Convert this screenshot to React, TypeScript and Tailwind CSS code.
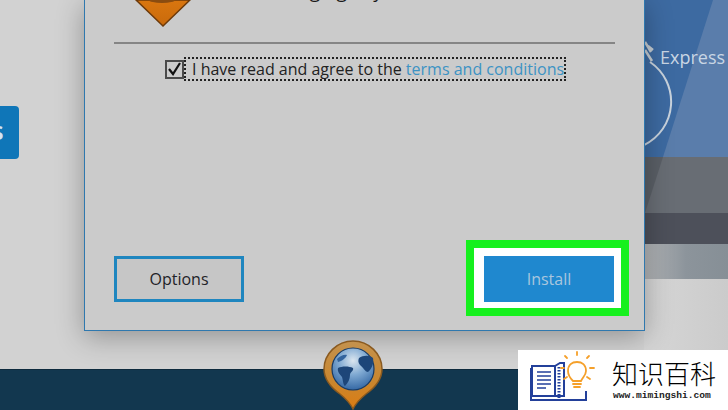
const sans = "font-['Open_Sans','Noto_Sans',sans-serif]";

function TopPin() {
  return (
    <svg className="absolute left-[50px] top-0" width="56" height="28" viewBox="0 0 56 28">
      <defs>
        <linearGradient id="pinFill" x1="0" y1="0" x2="0" y2="1">
          <stop offset="0" stopColor="#d9760f" />
          <stop offset="1" stopColor="#c96a0c" />
        </linearGradient>
      </defs>
      <path d="M1 0 L28 26 L55 0 Z" fill="url(#pinFill)" stroke="#6d3a0a" strokeWidth="1.5" />
      <ellipse cx="27" cy="0" rx="13" ry="3" fill="#8a4c10" />
    </svg>
  );
}

function GlobePin() {
  return (
    <svg className="absolute left-[322px] top-[339px]" width="62" height="71" viewBox="0 0 62 71">
      <defs>
        <radialGradient id="globe" cx="0.5" cy="0.3" r="0.75">
          <stop offset="0" stopColor="#dbe6ef" />
          <stop offset="0.45" stopColor="#7fa9d2" />
          <stop offset="1" stopColor="#2a5f9e" />
        </radialGradient>
        <linearGradient id="rim" x1="0" y1="0" x2="0" y2="1">
          <stop offset="0" stopColor="#c4924e" />
          <stop offset="0.6" stopColor="#c9862e" />
          <stop offset="1" stopColor="#dc7c12" />
        </linearGradient>
      </defs>
      <path
        d="M31 2 C15 2 2 15 2 30 C2 42 11 50 18 55 C23 59 28 64 31 70 C34 64 39 59 44 55 C51 50 60 42 60 30 C60 15 47 2 31 2 Z"
        fill="url(#rim)"
        stroke="#8a5a20"
        strokeWidth="1.5"
      />
      <circle cx="31" cy="30" r="21" fill="url(#globe)" stroke="#163a66" strokeWidth="1.2" />
      <path d="M16 29 C20 27 27 27 31 29 C32 32 28 33 28 36 C28 40 26 44 23 47 C21 46 21 41 20 38 C18 35 15 33 16 29 Z" fill="#1d4679" />
      <path d="M37 19 C41 16 48 16 51 19 C52 24 50 30 46 33 C43 33 41 28 38 26 C36 24 36 21 37 19 Z" fill="#1d4679" />
      <path d="M15 20 C18 17 22 15 25 16 C24 19 20 22 16 23 Z" fill="#33649e" />
    </svg>
  );
}

function Watermark() {
  return (
    <div className="absolute left-[518px] top-[350px] flex h-[60px] w-[210px] items-center bg-white">
      <svg width="86" height="60" viewBox="0 0 86 60" fill="none" className="shrink-0">
        <g stroke="#23409a" strokeWidth="2">
          <path d="M14 16 L37 16 L37 46 L14 46 Z" />
          <path d="M13 18 L13 50 L68 50 L68 41" />
          <path d="M37 16 L42 13 L46 13 L46 46 L37 46" />
        </g>
        <g stroke="#23409a" strokeWidth="1.6">
          <path d="M19 22 L33 22 M19 26 L33 26 M19 30 L33 30 M19 34 L33 34 M19 38 L28 38" />
          <path d="M41 17 L41 48" strokeDasharray="1.5 1.5" strokeWidth="3" />
        </g>
        <g stroke="#f5a02a" strokeWidth="1.8" strokeLinecap="round">
          <path d="M55 31 C51 27 50 24 50 21 C50 15 54 12 59 12 C64 12 68 15 68 21 C68 25 65 27 63 31 Z" />
          <path d="M55 34 L63 34 M56 37 L62 37" />
          <path d="M59 2 L59 5 M47 6 L49 8 M71 6 L69 8 M43 18 L46 18 M72 18 L76 18 M46 29 L49 27 M72 29 L69 27" />
        </g>
      </svg>
      <div className="ml-[8px] flex flex-col items-start">
        <span className="h-[30px] text-[26px] leading-[30px] text-black font-['Noto_Sans_CJK_SC',sans-serif] font-light">知识百科</span>
        <span className="mt-[2px] ml-px text-[9.6px] font-bold leading-[12px] text-[#222] font-['Liberation_Mono',monospace]">www.mimingshi.com</span>
      </div>
    </div>
  );
}

function SidePanel() {
  return (
    <div className="relative flex w-[84px] shrink-0 flex-col overflow-hidden bg-[#cfcfcf]">
      <div className="h-[157px] bg-[#3d6aa1]" />
      <div className="h-[56px] bg-[#5a5f66]" />
      <div className="h-[31px] bg-[#4d505a]" />
      <div className="h-[35px] bg-gradient-to-r from-[#b4b6b8] via-[#8c949b] to-[#868f96]" />
      <div className="flex-1 bg-gradient-to-r from-[#d6d6d6] to-[#cbcbcb]" />
      <svg className="absolute left-0 top-0" width="84" height="213" viewBox="0 0 84 213" fill="none">
        <path d="M69 0 L84 0 L84 157 L19 157 Z" fill="#5a7dab" />
        <path d="M19 157 L84 157 L84 213 L1 213 Z" fill="#686d74" />
        <path d="M6 62 A48 48 0 0 1 0 145" stroke="#c8d2dc" strokeWidth="2" />
        <path d="M1 42 L7 52 M1 50 L8 61 M4 46 L9 50" stroke="#c4ccd2" strokeWidth="2.5" />
      </svg>
      <span className={`absolute left-[16px] top-[46px] text-[18px] leading-[22px] text-[#c9d6e4] ${sans}`}>Express</span>
    </div>
  );
}

function Dialog() {
  return (
    <div className="absolute left-[84px] top-0 flex h-[331px] w-[561px] flex-col border-x border-b border-[#2f78ae] bg-[#cbcbcb] shadow-[0_6px_26px_rgba(0,0,0,0.3)]">
      <TopPin />
      <div className="mx-[29px] h-[44px] border-b-2 border-[#858585]">
        <p className={`ml-[146px] -mt-[20px] whitespace-nowrap text-[19px] leading-[22px] text-[#1a1a1a] ${sans}`}>
          Managing in your
        </p>
      </div>
      <div className={`mt-[13px] flex items-center pl-[80px] text-[16px] leading-[20px] ${sans}`}>
        <span className="flex h-[19px] w-[19px] shrink-0 items-center justify-center border-2 border-[#4a4a4a]">
          <svg width="15" height="14" viewBox="0 0 15 14" fill="none">
            <path d="M2 7 L6 12 L13 1" stroke="#111" strokeWidth="2.2" />
          </svg>
        </span>
        <span className="whitespace-nowrap border-2 border-dotted border-[#222] pl-[6px] text-[#222]">
          I have read and agree to the <span className="text-[#3d93c4]">terms and conditions</span>
        </span>
      </div>
      <div className={`mt-auto mb-[28px] flex justify-between pl-[29px] pr-[30px] text-[16px] ${sans}`}>
        <button className="h-[46px] w-[130px] border-[3px] border-[#1f86bf] bg-[#c6c6c6] text-[#1f2328]">Options</button>
        <div className="relative">
          <span className="absolute -left-[18px] -right-[15px] -top-[16px] -bottom-[14px] border-[8px] border-[#16f01e] bg-white" />
          <button className="relative h-[46px] w-[130px] bg-[#1f88cf] text-[#a9c6de]">Install</button>
        </div>
      </div>
    </div>
  );
}

export default function App() {
  return (
    <div className="relative flex h-[410px] w-[728px] flex-col overflow-hidden bg-[#d2d2d2]">
      <div className="flex h-[369px]">
        <div className="flex-1 pt-[106px]">
          <div className={`flex h-[53px] w-[19px] items-center justify-start overflow-hidden rounded-r-[4px] bg-[#0f76b8] text-[26px] font-semibold text-[#d5e6f2] ${sans}`}>
            <span className="-ml-[9px] -mt-[4px]">s</span>
          </div>
        </div>
        <SidePanel />
      </div>
      <div className="flex-1 border-t border-[#0d2a3d] bg-[#12374f]" />
      <Dialog />
      <GlobePin />
      <Watermark />
    </div>
  );
}
